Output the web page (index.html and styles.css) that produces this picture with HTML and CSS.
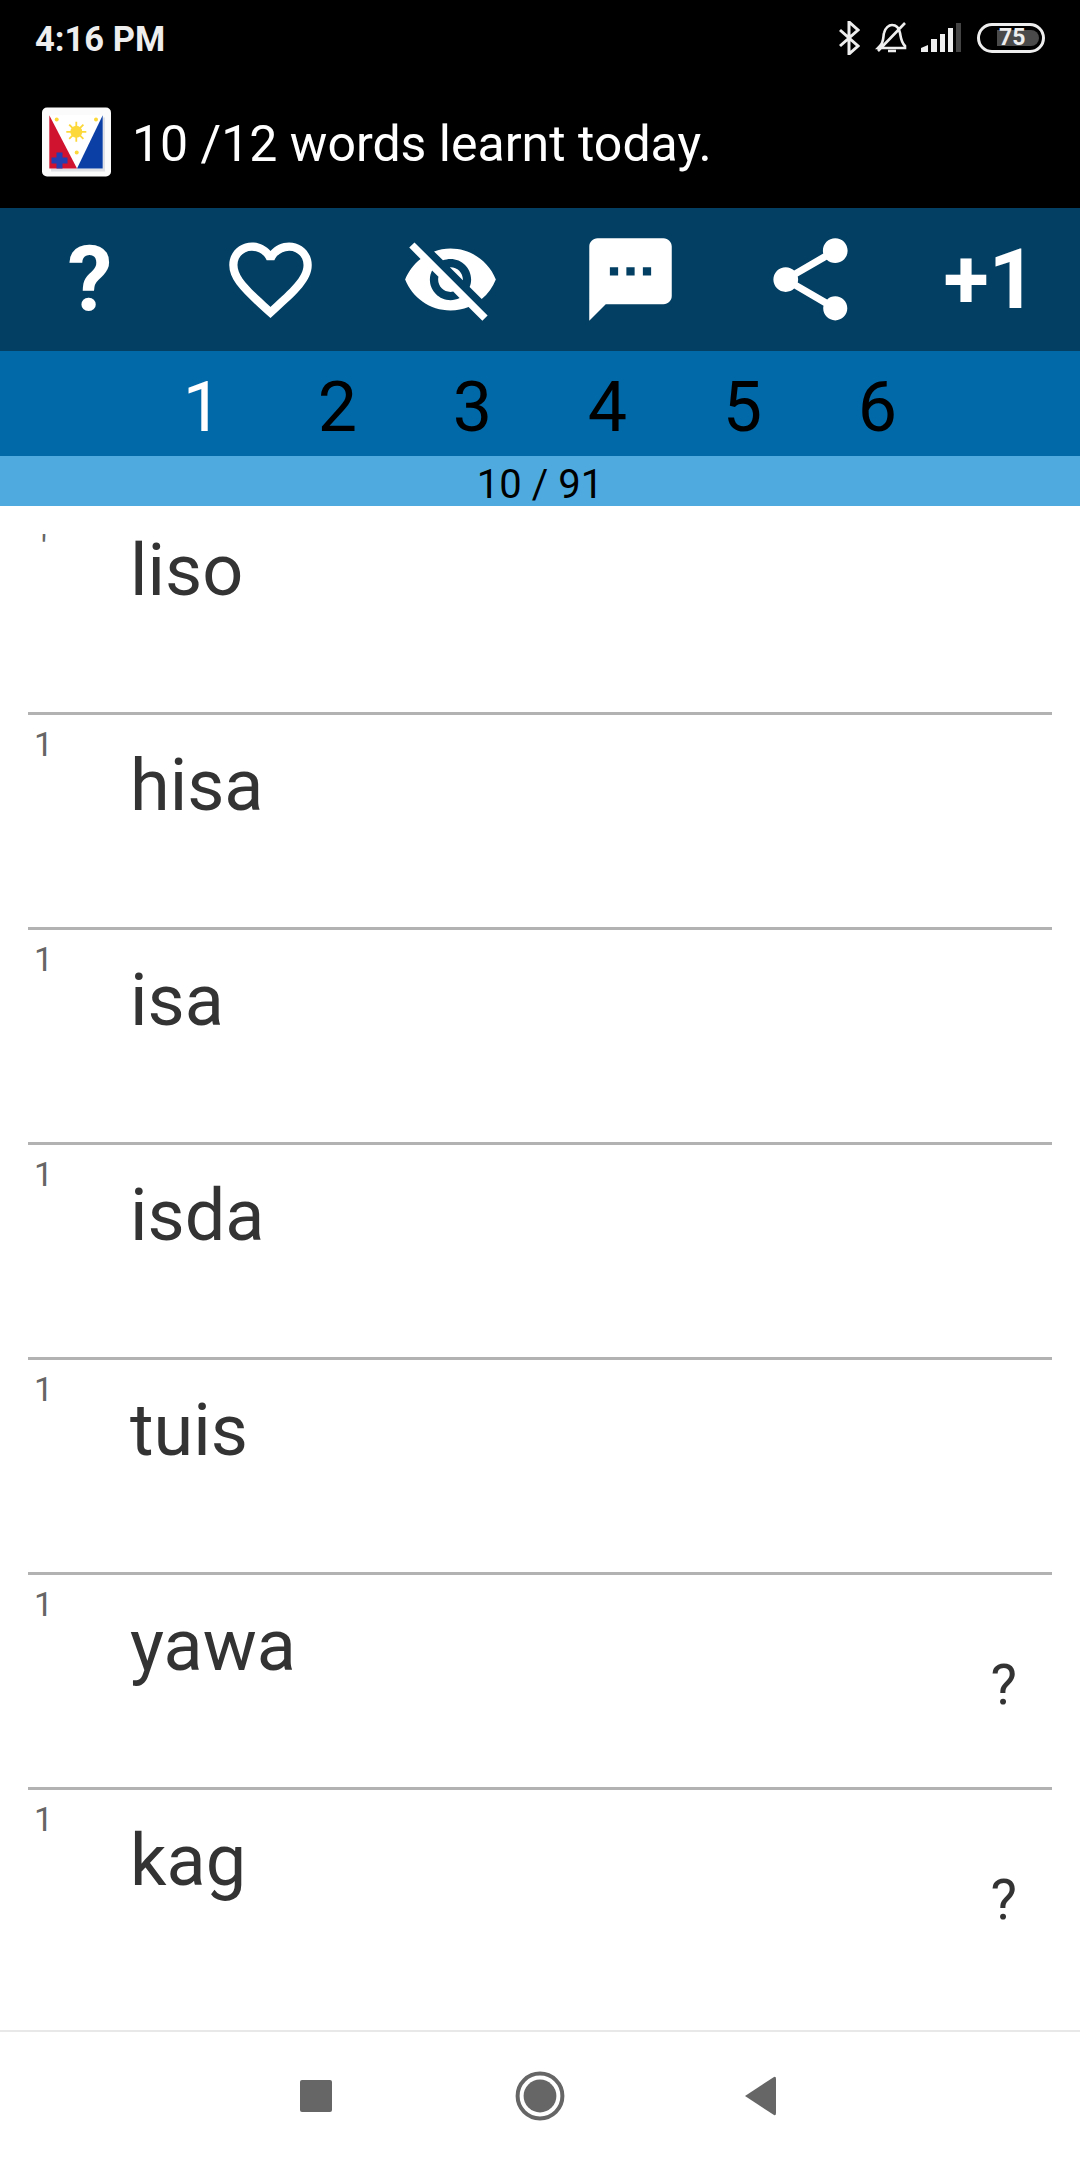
FILE: index.html
```html
<!DOCTYPE html>
<html lang="en">
<head>
<meta charset="utf-8">
<title>Words</title>
<link rel="stylesheet" href="styles.css">
</head>
<body>
<div class="screen">
  <header class="top">
    <div class="status">
      <span class="time">4:16 PM</span>
      <div class="status-icons">
        <svg class="i-bt" viewBox="0 0 22 34"><path d="M2 9 L20 25 L11 33 V1 L20 9 L2 25"/></svg>
        <svg class="i-bell" viewBox="0 0 33 32"><path d="M5 24 C9 20 8 15 9 11 C10 6 14 3 17 3 C21 3 24 6 25 11 C26 16 26 20 30 24 L30 26 H3 L5 24 Z M30 1 L3 29 M13 29 H21"/></svg>
        <svg class="i-signal" viewBox="0 0 41 29"><path class="on" d="M1 29 V25 L8 22 V29 Z"/><rect class="on" x="11" y="16" width="6" height="13"/><rect class="on" x="20" y="11" width="5" height="18"/><rect class="on" x="28" y="5" width="5" height="24"/><rect class="off" x="36" y="0" width="5" height="29"/></svg>
        <div class="battery"><span class="battery-fill">75</span></div>
      </div>
    </div>
    <div class="titlebar">
      <svg class="logo" viewBox="0 0 69 69">
        <rect width="69" height="69" rx="5" fill="#fbfbfb"/>
        <rect x="9" y="10" width="54" height="54" fill="#dfe1e6"/>
        <rect x="7.3" y="7.7" width="53.4" height="53.3" fill="#fff"/>
        <polygon points="7.3,7.7 7.3,61 35,61" fill="#d0132f"/>
        <polygon points="60.7,7.7 60.7,61 35,61" fill="#0b3fa6"/>
        <g stroke="#fcd83a" stroke-width="1.8"><path d="M34.3 14.3V34.3M24.3 24.3H44.3M27.2 17.2L41.4 31.4M41.4 17.2L27.2 31.4"/></g>
        <circle cx="34.3" cy="24.3" r="6" fill="#fcd83a"/>
        <circle cx="14.7" cy="12" r="2" fill="#fcd83a"/>
        <circle cx="54" cy="12" r="2" fill="#fcd83a"/>
        <circle cx="34.7" cy="45" r="2" fill="#fcd83a"/>
        <path d="M14.5 45h6v5h5v6h-5v5h-6v-5h-5v-6h5z" fill="#233fb0"/>
      </svg>
      <span class="title">10 /12 words learnt today.</span>
    </div>
  </header>

  <nav class="toolbar">
    <span class="tool tool-q">?</span>
    <svg class="tool-icon" viewBox="0 0 24 24"><path d="M16.5 3c-1.74 0-3.41.81-4.5 2.09C10.91 3.81 9.24 3 7.5 3 4.42 3 2 5.42 2 8.5c0 3.78 3.4 6.86 8.55 11.54L12 21.35l1.45-1.32C18.6 15.36 22 12.28 22 8.5 22 5.42 19.58 3 16.5 3zm-4.4 15.55l-.1.1-.1-.1C7.14 14.24 4 11.39 4 8.5 4 6.5 5.5 5 7.5 5c1.54 0 3.04.99 3.57 2.36h1.87C13.46 5.99 14.96 5 16.5 5c2 0 3.5 1.5 3.5 3.5 0 2.89-3.14 5.74-7.9 10.05z"/></svg>
    <svg class="tool-icon" viewBox="0 0 24 24"><path d="M12 7c2.76 0 5 2.24 5 5 0 .65-.13 1.26-.36 1.83l2.92 2.92c1.51-1.26 2.7-2.89 3.43-4.75-1.73-4.39-6-7.5-11-7.5-1.4 0-2.74.25-3.98.7l2.16 2.16C10.74 7.13 11.35 7 12 7zM2 4.27l2.28 2.28.46.46C3.08 8.3 1.78 10.02 1 12c1.73 4.39 6 7.5 11 7.5 1.55 0 3.03-.3 4.38-.84l.42.42L19.73 22 21 20.73 3.27 3 2 4.27zM7.53 9.8l1.55 1.55c-.05.21-.08.43-.08.65 0 1.66 1.34 3 3 3 .22 0 .44-.03.65-.08l1.55 1.55c-.67.33-1.41.53-2.2.53-2.76 0-5-2.24-5-5 0-.79.2-1.53.53-2.2zm4.31-.78l3.15 3.15.02-.16c0-1.66-1.34-3-3-3l-.17.01z"/></svg>
    <svg class="tool-icon" viewBox="0 0 24 24"><path d="M20 2H4c-1.1 0-1.99.9-1.99 2L2 22l4-4h14c1.1 0 2-.9 2-2V4c0-1.1-.9-2-2-2zM9 11H7V9h2v2zm4 0h-2V9h2v2zm4 0h-2V9h2v2z"/></svg>
    <svg class="tool-icon" viewBox="0 0 24 24"><path d="M18 16.08c-.76 0-1.44.3-1.96.77L8.91 12.7c.05-.23.09-.46.09-.7s-.04-.47-.09-.7l7.05-4.11c.54.5 1.25.81 2.04.81 1.66 0 3-1.34 3-3s-1.34-3-3-3-3 1.34-3 3c0 .24.04.47.09.7L8.04 9.81C7.5 9.31 6.79 9 6 9c-1.66 0-3 1.34-3 3s1.34 3 3 3c.79 0 1.5-.31 2.04-.81l7.12 4.16c-.05.21-.08.43-.08.65 0 1.61 1.31 2.92 2.92 2.92 1.61 0 2.92-1.31 2.92-2.92s-1.31-2.92-2.92-2.92z"/></svg>
    <span class="tool tool-plus">+1</span>
  </nav>

  <div class="tabs">
    <span class="tab active">1</span>
    <span class="tab">2</span>
    <span class="tab">3</span>
    <span class="tab">4</span>
    <span class="tab">5</span>
    <span class="tab">6</span>
  </div>

  <div class="progress">10 / 91</div>

  <main class="list">
    <div class="row first"><span class="num">'</span><span class="word">liso</span></div>
    <div class="row"><span class="num">1</span><span class="word">hisa</span></div>
    <div class="row"><span class="num">1</span><span class="word">isa</span></div>
    <div class="row"><span class="num">1</span><span class="word">isda</span></div>
    <div class="row"><span class="num">1</span><span class="word">tuis</span></div>
    <div class="row"><span class="num">1</span><span class="word">yawa</span><span class="mark">?</span></div>
    <div class="row last"><span class="num">1</span><span class="word">kag</span><span class="mark">?</span></div>
  </main>

  <footer class="navbar">
    <svg class="nav-icon" viewBox="0 0 480 60">
      <rect x="0" y="14" width="32" height="32" rx="2"/>
      <circle class="ring" cx="240" cy="30" r="22.4"/>
      <circle cx="240" cy="30" r="16.4"/>
      <path d="M445 30 L474 11 Q476 10 476 13 V47 Q476 50 474 49 Z"/>
    </svg>
  </footer>
</div>
</body>
</html>
```
FILE: styles.css
```css
* { box-sizing: border-box; }
html, body { margin: 0; padding: 0; }
body { font-family: Roboto, "Liberation Sans", sans-serif; background: #fff; }
.screen { width: 1080px; height: 2160px; display: flex; flex-direction: column; overflow: hidden; }

.top { height: 208px; background: #000; color: #fff; flex: none; }
.status { height: 70px; display: flex; align-items: flex-start; justify-content: space-between; padding: 19px 35px 0; }
.time { font-size: 34.5px; line-height: 40px; font-weight: 700; color: #eee; }
.status-icons { display: flex; align-items: flex-start; }
.i-bt { width: 22px; height: 34px; margin: 2px 15px 0 3px; fill: none; stroke: #eee; stroke-width: 3; }
.i-bell { width: 33px; height: 32px; margin: 3px 12px 0 0; fill: none; stroke: #eee; stroke-width: 2.6; }
.i-signal { width: 41px; height: 29px; margin: 4px 16px 0 0; }
.i-signal .on { fill: #eee; }
.i-signal .off { fill: #444; }
.battery { width: 68px; height: 30px; margin-top: 4px; border: 3px solid #eee; border-radius: 15px; padding: 4px 3px 4px 17px; }
.battery-fill { display: block; height: 16px; background: #4a4a4a; border-radius: 0 8px 8px 0; font-size: 23px; line-height: 16px; font-weight: 700; color: #eee; padding-left: 2px; }
.titlebar { height: 138px; display: flex; align-items: flex-start; padding: 37px 0 0 42px; }
.logo { width: 69px; height: 70px; flex: none; }
.title { font-size: 50px; line-height: 58px; margin: 8px 0 0 21px; color: #fff; }

.toolbar { height: 143px; background: #023f63; display: grid; grid-template-columns: repeat(6, 1fr); align-items: center; justify-items: center; flex: none; }
.tool-icon { width: 99px; height: 99px; fill: #fff; }
.tool { color: #fff; font-weight: 700; }
.tool-q { font-size: 90px; line-height: 108px; }
.tool-plus { font-size: 83px; line-height: 108px; }

.tabs { height: 105px; background: #0269a9; display: grid; grid-template-columns: repeat(6, 135px); justify-content: center; align-items: center; flex: none; }
.tab { font-size: 70px; line-height: 105px; padding-top: 4px; height: 105px; text-align: center; color: #000; }
.tab.active { color: #fff; }

.progress { height: 50px; padding-top: 5px; background: #4fabdf; color: #000; font-size: 40px; line-height: 48px; text-align: center; flex: none; }

.list { flex: 1; padding: 0 28px; }
.row { height: 215px; display: flex; align-items: flex-start; border-bottom: 3px solid #b2b2b2; }
.row.first { height: 209px; }
.row.last { height: 233px; border-bottom: 0; }
.num { width: 102px; flex: none; padding-left: 6px; padding-top: 9px; font-size: 34px; line-height: 40px; color: #666; }
.word { font-size: 72px; line-height: 84px; padding-top: 29px; color: #333; }
.row.first .num { padding-left: 13px; padding-top: 21px; }
.row.first .word { padding-top: 23px; }
.mark { margin-left: auto; margin-right: 35px; padding-top: 77px; font-size: 56px; line-height: 66px; color: #333; }

.navbar { height: 130px; background: #fff; border-top: 2px solid #e8e8e8; display: flex; flex: none; padding-top: 34px; justify-content: center; }
.nav-icon { width: 480px; height: 60px; fill: #666; display: block; }
.ring { fill: none; stroke: #666; stroke-width: 4; }
```
